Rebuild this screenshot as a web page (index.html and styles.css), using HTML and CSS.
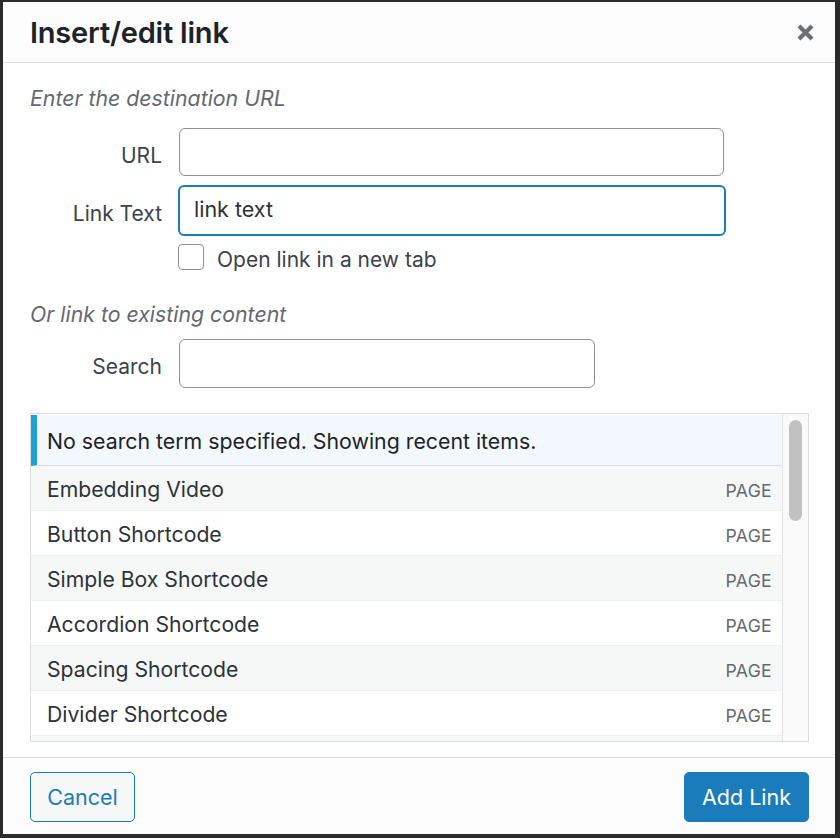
FILE: index.html
```html
<!DOCTYPE html>
<html>
<head>
<meta charset="utf-8">
<link rel="stylesheet" href="styles.css">
</head>
<body>
<div class="dialog">
  <div class="header">
    <h1 class="title">Insert/edit link</h1>
    <button class="close" aria-label="Close">
      <svg width="19" height="19" viewBox="0 0 19 19"><path d="M3 3 L16 16 M16 3 L3 16" stroke="#6b6e72" stroke-width="4.2" stroke-linecap="butt"/></svg>
    </button>
  </div>
  <div class="content">
    <p class="hint">Enter the destination URL</p>
    <div class="row row-url">
      <label class="lbl">URL</label>
      <div class="input url-input"></div>
    </div>
    <div class="row row-text">
      <label class="lbl">Link Text</label>
      <div class="input text-input focus">link text</div>
    </div>
    <div class="check-row">
      <span class="checkbox"></span>
      <span class="check-label">Open link in a new tab</span>
    </div>
    <p class="hint hint-2">Or link to existing content</p>
    <div class="row row-search">
      <label class="lbl">Search</label>
      <div class="input search-input"></div>
    </div>
    <div class="results">
      <div class="list">
        <div class="notice">No search term specified. Showing recent items.</div>
        <div class="item alt"><span>Embedding Video</span><span class="type">PAGE</span></div>
        <div class="item"><span>Button Shortcode</span><span class="type">PAGE</span></div>
        <div class="item alt"><span>Simple Box Shortcode</span><span class="type">PAGE</span></div>
        <div class="item"><span>Accordion Shortcode</span><span class="type">PAGE</span></div>
        <div class="item alt"><span>Spacing Shortcode</span><span class="type">PAGE</span></div>
        <div class="item"><span>Divider Shortcode</span><span class="type">PAGE</span></div>
        <div class="item alt"></div>
      </div>
      <div class="scrollbar"><div class="thumb"></div></div>
    </div>
  </div>
  <div class="footer">
    <button class="btn btn-cancel">Cancel</button>
    <button class="btn btn-primary">Add Link</button>
  </div>
</div>
</body>
</html>
```
FILE: styles.css
```css
* { box-sizing: border-box; }
html, body { margin: 0; padding: 0; }
body {
  background: #2b2b2b;
  width: 840px;
  height: 838px;
  overflow: hidden;
  font-family: Inter, "Noto Sans", "Liberation Sans", sans-serif;
  color: #3c434a;
}
.dialog {
  margin: 2px 0 0 3px;
  width: 832px;
  height: 832px;
  background: #fff;
  display: flex;
  flex-direction: column;
}
.header {
  height: 61px;
  background: #fcfcfc;
  border-bottom: 1px solid #dcdcde;
  display: flex;
  align-items: center;
  justify-content: space-between;
  padding: 0 20px 0 27px;
  flex: none;
}
.title {
  margin: 0;
  font-size: 29px;
  font-weight: 600;
  color: #1d2327;
  letter-spacing: -0.2px;
}
.close {
  border: 0;
  background: none;
  padding: 0;
  width: 19px;
  height: 19px;
  display: flex;
}
.content {
  flex: 1;
  padding: 22px 0 0 27px;
  display: flex;
  flex-direction: column;
  min-height: 0;
}
.hint {
  margin: 0;
  font-style: italic;
  color: #646970;
  font-size: 21.3px;
  line-height: 26px;
}
.row {
  display: flex;
  align-items: center;
}
.lbl {
  width: 132px;
  text-align: right;
  font-size: 21px;
  line-height: 26px;
  color: #3c434a;
  padding-top: 7px;
  margin-right: 17px;
}
.input {
  border: 1px solid #8c8f94;
  border-radius: 6px;
  background: #fff;
  font-size: 21.5px;
  color: #2c3338;
  display: flex;
  align-items: center;
  padding: 0 14px;
}
.row-url { margin-top: 17px; }
.url-input { width: 545px; height: 48px; }
.row-text { margin-top: 9px; }
.text-input { width: 548px; height: 51px; margin-left: -1px; border: 2px solid #1b7cbb; padding-left: 14px; padding-bottom: 3px; }
.check-row {
  display: flex;
  align-items: flex-start;
  height: 26px;
  margin: 8px 0 0 148px;
}
.checkbox {
  width: 26px;
  height: 26px;
  border: 1px solid #8c8f94;
  border-radius: 4px;
  background: #fff;
  margin-right: 13px;
  flex: none;
}
.check-label { font-size: 21px; line-height: 26px; color: #3c434a; padding-top: 3px; }
.hint-2 { margin-top: 31px; }
.row-search { margin-top: 12px; }
.search-input { width: 416px; height: 49px; }
.results {
  margin-top: 25px;
  width: 779px;
  height: 329px;
  border: 1px solid #dcdcde;
  display: flex;
  overflow: hidden;
  flex: none;
}
.list {
  flex: 1;
  border-right: 1px solid #e4e4e4;
  overflow: hidden;
  padding-top: 1px;
}
.notice {
  height: 51px;
  background: #f2f8fd;
  border-left: 6px solid #1ba3d6;
  border-bottom: 1px solid #dcdcde;
  display: flex;
  align-items: center;
  padding-left: 10px;
  padding-top: 2px;
  font-size: 21.3px;
  color: #1d2327;
}
.item {
  height: 45px;
  border-bottom: 1px solid #f0f0f1;
  display: flex;
  align-items: center;
  justify-content: space-between;
  padding: 2px 10px 0 16px;
  font-size: 21.2px;
  color: #2c3338;
  background: #fff;
}
.item.alt { background: #f6f7f7; }
.type {
  font-size: 17.6px;
  color: #646970;
  letter-spacing: 0.3px;
  padding-top: 2px;
}
.scrollbar {
  width: 25px;
  background: #fafafa;
  padding: 6px 0 0 6px;
}
.thumb {
  width: 13px;
  height: 101px;
  border-radius: 7px;
  background: #c1c1c1;
}
.footer {
  height: 77px;
  flex: none;
  border-top: 1px solid #dcdcde;
  background: #fcfcfc;
  display: flex;
  align-items: center;
  justify-content: space-between;
  padding: 1px 26px 0 27px;
}
.btn {
  height: 50px;
  border-radius: 5px;
  font-family: inherit;
  font-size: 21.5px;
  line-height: 26px;
  padding: 0;
  display: flex;
  align-items: center;
  justify-content: center;
  cursor: pointer;
}
.btn-cancel {
  width: 105px;
  background: #f6f7f7;
  border: 1.5px solid #1b7cbb;
  color: #1b7cbb;
}
.btn-primary {
  width: 125px;
  background: #1b7cbb;
  border: 1px solid #1b7cbb;
  color: #fff;
}
```
